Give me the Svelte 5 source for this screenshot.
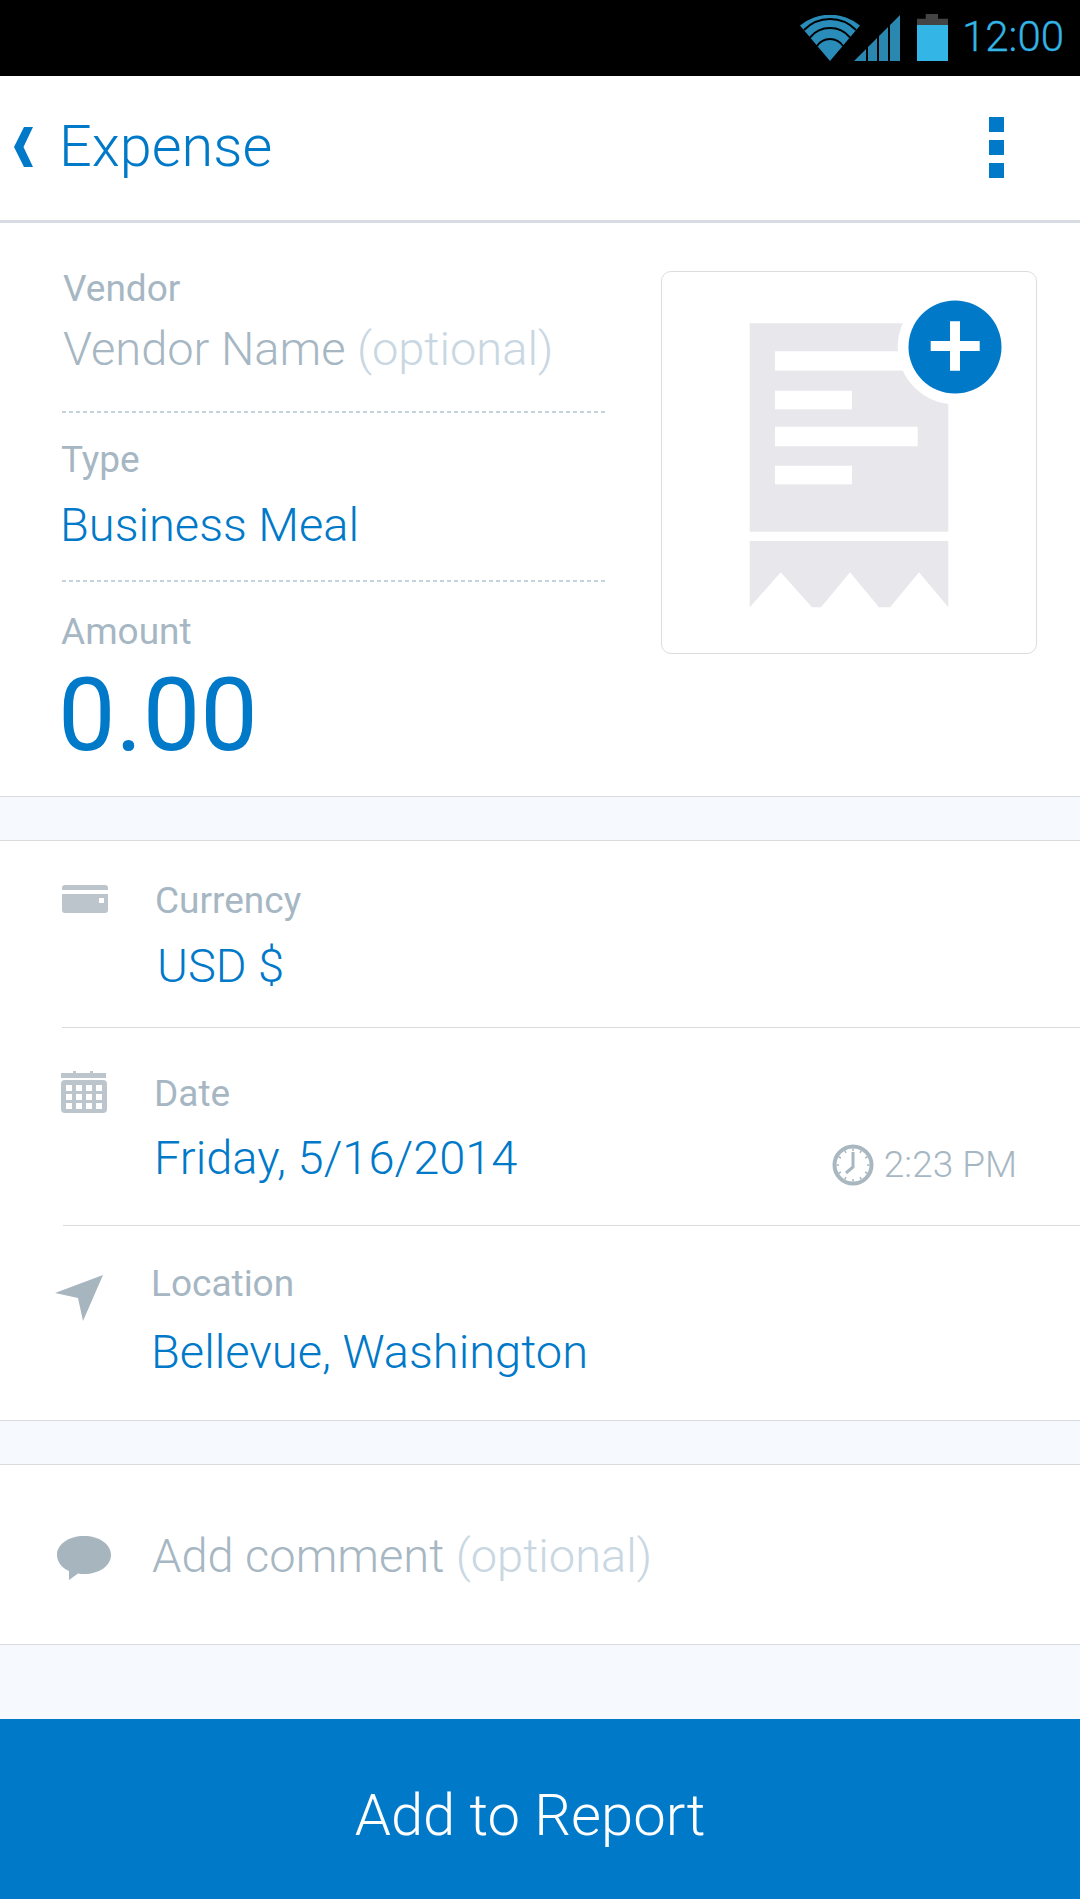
<script>
  const ticks = [0, 30, 60, 90, 120, 150, 180, 210, 240, 270, 300, 330];
</script>

<div class="screen">
  <header class="status">
    <svg class="wifi" viewBox="0 0 60 46" aria-hidden="true">
      <path d="M30 46 0 10.500A47 47 0 0 1 60 10.500Z" fill="#2a8cb8"/>
      <g fill="none" stroke="#000" stroke-width="2">
        <path d="M4 15A36 36 0 0 1 56 15"/>
        <path d="M10 22.500A26 26 0 0 1 50 22.500"/>
        <path d="M17 31A15.500 15.500 0 0 1 43 31"/>
      </g>
    </svg>
    <svg class="signal" viewBox="0 0 46 46" aria-hidden="true">
      <path d="M0 46 12 34V46ZM14 32 23 23V46H14ZM25 21 34 12V46H25ZM36 10 46 0V46H36Z" fill="#2a87b0"/>
    </svg>
    <svg class="battery" viewBox="0 0 31 47" aria-hidden="true">
      <path d="M8.700 0H21V4.700H31V11H0V4.700H8.700Z" fill="#444"/>
      <rect y="11" width="31" height="36" fill="#33b5e5"/>
    </svg>
    <span class="clock">12:00</span>
  </header>

  <nav class="bar">
    <svg class="chev" viewBox="0 0 19 40" aria-hidden="true"><path d="M10 0H19L9.500 20 19 40H10L0 20Z" fill="#0079c9"/></svg>
    <h1>Expense</h1>
    <div class="dots"><i></i><i></i><i></i></div>
  </nav>

  <section class="top">
    <div class="fields">
      <div class="field first">
        <div class="label">Vendor</div>
        <div class="value muted">Vendor Name <span class="opt">(optional)</span></div>
      </div>
      <div class="field second">
        <div class="label">Type</div>
        <div class="value">Business Meal</div>
      </div>
      <div class="field third">
        <div class="label">Amount</div>
        <div class="amount">0.00</div>
      </div>
    </div>
    <div class="card">
      <svg viewBox="0 0 376 382" aria-hidden="true">
        <rect x="87.700" y="51.300" width="198.600" height="208.400" fill="#e7e7ec"/>
        <polygon points="87.700,335.300 87.700,269 286.300,269 286.300,335.300 257,300.300 228,335.300 217,335.300 188,300.300 159,335.300 150,335.300 118.700,300.300" fill="#e7e7ec"/>
        <rect x="113" y="79.300" width="170" height="19.300" fill="#fff"/>
        <rect x="113" y="118.700" width="77" height="18.700" fill="#fff"/>
        <rect x="113" y="154.700" width="142.700" height="19.600" fill="#fff"/>
        <rect x="113" y="193.700" width="77" height="18.700" fill="#fff"/>
        <circle cx="293" cy="75" r="57.300" fill="#fff"/>
        <circle cx="293" cy="75" r="46.500" fill="#0079c9"/>
        <path d="M268.700 69H288V49.300H298V69H317.700V79H298V98.700H288V79H268.700Z" fill="#fff"/>
      </svg>
    </div>
  </section>

  <div class="band"></div>

  <section class="group">
    <div class="row currency">
      <svg class="ico" viewBox="0 0 46 28" aria-hidden="true">
        <path d="M3 0H43A3 3 0 0 1 46 3V5H0V3A3 3 0 0 1 3 0Z" fill="#bcc5cb"/>
        <path d="M0 9H46V25A3 3 0 0 1 43 28H3A3 3 0 0 1 0 25ZM37 13V18H42V13Z" fill="#bcc5cb" fill-rule="evenodd"/>
      </svg>
      <div class="text">
        <div class="label">Currency</div>
        <div class="value">USD $</div>
      </div>
    </div>
    <div class="row date">
      <svg class="ico" viewBox="0 0 46 42" aria-hidden="true">
        <path fill="#bcc5cb" fill-rule="evenodd" d="M0 2H12V0H15V2H29V0H32V2H45V7H0ZM4 9H42A4 4 0 0 1 46 13V38A4 4 0 0 1 42 42H4A4 4 0 0 1 0 38V13A4 4 0 0 1 4 9ZM5 14V20H11V14ZM15 14V20H21V14ZM25 14V20H31V14ZM35 14V20H41V14ZM5 23V29H11V23ZM15 23V29H21V23ZM25 23V29H31V23ZM35 23V29H41V23ZM5 32V38H11V32ZM15 32V38H21V32ZM25 32V38H31V32ZM35 32V38H41V32Z"/>
      </svg>
      <div class="text grow">
        <div class="label">Date</div>
        <div class="dateline">
          <div class="value">Friday, 5/16/2014</div>
          <div class="time">
            <svg class="clockico" viewBox="0 0 42 42" aria-hidden="true">
              <circle cx="21" cy="21" r="18.500" fill="none" stroke="#a9b7c0" stroke-width="4"/>
              {#each ticks as t}
                <path d="M21 4.500V7" stroke="#a9b7c0" stroke-width="1.500" transform="rotate({t} 21 21)"/>
              {/each}
              <path d="M21 8V23L14 29" fill="none" stroke="#a9b7c0" stroke-width="3"/>
            </svg>
            <span>2:23 PM</span>
          </div>
        </div>
      </div>
    </div>
    <div class="row location">
      <svg class="ico" viewBox="0 0 48 46" aria-hidden="true">
        <path d="M48 0 28 46 23 23 0 18Z" fill="#a7b5be"/>
      </svg>
      <div class="text">
        <div class="label">Location</div>
        <div class="value">Bellevue, Washington</div>
      </div>
    </div>
  </section>

  <div class="band"></div>

  <section class="comment">
    <svg class="ico" viewBox="0 0 54 44" aria-hidden="true">
      <path d="M27 0C42 0 54 8 54 19S42 38 27 38C25 38 23 38 21 37.500L12 44 12 35C5 32 0 26 0 19 0 8 12 0 27 0Z" fill="#a7b5be"/>
    </svg>
    <div class="value muted">Add comment <span class="opt">(optional)</span></div>
  </section>

  <div class="band last"></div>

  <button class="cta"><span>Add to Report</span></button>
</div>

<style>
  :global(body) { margin: 0; background: #fff; }
  .screen {
    width: 1080px;
    height: 1900px;
    display: flex;
    flex-direction: column;
    font-family: Roboto, "Liberation Sans", sans-serif;
    background: #fff;
    overflow: hidden;
  }
  .status {
    height: 76px;
    background: #000;
    display: flex;
    align-items: flex-start;
    flex-shrink: 0;
    padding-left: 800px;
    box-sizing: border-box;
  }
  .wifi { width: 60px; height: 46px; margin-top: 15px; }
  .signal { width: 46px; height: 46px; margin-top: 15px; margin-left: -6px; }
  .battery { width: 31px; height: 47px; margin-top: 14px; margin-left: 17px; }
  .clock {
    margin-left: 14px;
    font-size: 42px;
    font-weight: 300;
    line-height: 74px;
    color: #33b5e5;
    -webkit-text-stroke: 0.3px #33b5e5;
  }
  .bar {
    height: 147px;
    box-sizing: border-box;
    border-bottom: 3px solid #d6dce1;
    display: flex;
    align-items: center;
    padding-left: 14px;
    flex-shrink: 0;
  }
  .chev { width: 19px; height: 40px; margin-top: -2px; }
  h1 {
    margin: -2px 0 0 26px;
    font-size: 57.600px;
    font-weight: 300;
    color: #0079c9;
    line-height: 1;
  }
  .dots {
    margin-left: auto;
    margin-right: 76px;
    display: flex;
    flex-direction: column;
    gap: 8px;
    margin-top: -1px;
  }
  .dots i { display: block; width: 15px; height: 15px; background: #0079c9; }
  .top {
    height: 574px;
    box-sizing: border-box;
    border-bottom: 1px solid #d9dbdd;
    display: flex;
    align-items: flex-start;
    flex-shrink: 0;
  }
  .fields { width: 605px; padding-left: 61px; box-sizing: border-box; }
  .field.first, .field.second {
    box-sizing: border-box;
    margin-left: 1px;
    background: repeating-linear-gradient(90deg, #c5d3dd 0 4px, transparent 4px 7px) bottom / 100% 2px no-repeat;
  }
  .field.first { height: 190px; padding-top: 46px; }
  .field.second { height: 169px; padding-top: 27px; }
  .field.third { padding-top: 30px; }
  .first .label, .first .value { margin-left: 1px; }
  .second .label { margin-left: -1px; }
  .second .value { margin-left: -2px; }
  .first .value { margin-top: 10px; }
  .second .value { margin-top: 15px; }
  .label {
    font-size: 37px;
    line-height: 40px;
    color: #a6b7c3;
  }
  .value {
    font-size: 47px;
    font-weight: 300;
    line-height: 60px;
    color: #0079c9;
    margin-top: 14px;
  }
  .value.muted { color: #a6b7c3; }
  .opt { color: #c8d7e2; }
  .amount {
    font-size: 102.500px;
    line-height: 104px;
    color: #0079c9;
    margin-left: -3px;
    margin-top: 11px;
  }
  .card {
    margin: 48px 0 0 56px;
    width: 376px;
    height: 383px;
    box-sizing: border-box;
    border: 1px solid #dddddf;
    border-radius: 10px;
  }
  .card svg { display: block; width: 376px; height: 382px; margin: 0 0 0 0; }
  .band { height: 43px; background: #f6fafe; border-bottom: 1px solid #d9dbdd; flex-shrink: 0; }
  .band.last { height: 74px; border-bottom: 0; }
  .group { border-bottom: 1px solid #d9dbdd; flex-shrink: 0; }
  .row { display: flex; align-items: flex-start; box-sizing: border-box; margin-right: 0; }
  .currency { height: 187px; margin-left: 62px; border-bottom: 1px solid #d9dbdd; padding-top: 40px; }
  .date { height: 198px; margin-left: 63px; border-bottom: 1px solid #d9dbdd; padding-top: 46px; }
  .location { height: 194px; margin-left: 55px; padding-top: 38px; }
  .currency .ico { width: 46px; height: 28px; margin-top: 4px; }
  .currency .text { margin-left: 47px; }
  .currency .value { margin-left: 2px; margin-top: 15px; }
  .date .ico { width: 46px; height: 42px; margin-top: -3px; margin-left: -2px; }
  .date .text { margin-left: 47px; }
  .location .ico { width: 48px; height: 46px; margin-top: 11px; }
  .location .text { margin-left: 48px; }
  .location .value { margin-top: 18px; }
  .grow { flex: 1; }
  .dateline { display: flex; align-items: flex-end; }
  .time {
    margin-left: auto;
    margin-right: 63px;
    margin-bottom: 1px;
    display: flex;
    align-items: center;
    gap: 10px;
    font-size: 37px;
    font-weight: 300;
    line-height: 44px;
    color: #a6b7c3;
  }
  .clockico { width: 42px; height: 42px; }
  .comment {
    height: 180px;
    box-sizing: border-box;
    border-bottom: 1px solid #d9dbdd;
    display: flex;
    align-items: center;
    padding-left: 57px;
    flex-shrink: 0;
  }
  .comment .ico { width: 54px; height: 44px; margin-top: 7px; }
  .comment .value { margin: 2px 0 0 41px; }
  .cta {
    height: 180px;
    border: 0;
    background: #0079c9;
    color: #fff;
    font-family: inherit;
    font-size: 58px;
    font-weight: 300;
    flex-shrink: 0;
    padding: 12px 20px 0 0;
    box-sizing: border-box;
    width: 100%;
  }
</style>
